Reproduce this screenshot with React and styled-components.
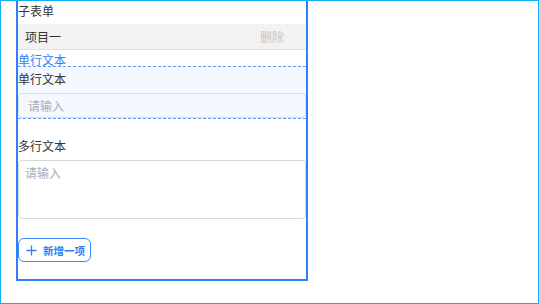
import React from 'react'
import styled, { createGlobalStyle } from 'styled-components'

const GlobalStyle = createGlobalStyle`
  html, body {
    margin: 0;
    padding: 0;
    background: #fff;
  }
  body {
    font-family: "Noto Sans CJK SC", "Noto Sans", sans-serif;
    font-size: 12px;
    color: #333;
  }
  * {
    box-sizing: border-box;
  }
`

const Page = styled.div`
  width: 539px;
  height: 304px;
  border: 1px solid #12aef5;
  padding-left: 15px;
  overflow: hidden;
`

const Frame = styled.div`
  width: 292px;
  height: 280px;
  border: 2px solid #2f80f8;
  border-top: none;
  display: flex;
  flex-direction: column;
`

const Title = styled.div`
  height: 23px;
  line-height: 20px;
`

const ItemRow = styled.div`
  height: 26px;
  display: flex;
  align-items: center;
  justify-content: space-between;
  padding: 0 22px 0 7px;
  background: #f2f2f2;
  border-bottom: 1px solid #e2e2e2;
`

const DeleteText = styled.span`
  color: #c6c6c6;
`

const FieldTag = styled.div`
  color: #2f80f8;
  height: 16px;
  padding-top: 4px;
  line-height: 12px;
`

const ActiveField = styled.div`
  background: #f5f9ff;
  border-top: 1px dashed #5b9ef8;
  border-bottom: 1px dashed #5b9ef8;
  padding-top: 3px;
  display: flex;
  flex-direction: column;
  gap: 5px;
`

const Label = styled.div`
  line-height: 18px;
`

const Input = styled.div`
  height: 25px;
  display: flex;
  align-items: center;
  padding: 0 9px;
  border: 1px solid #dadde2;
  border-radius: 4px;
  color: #a8adb5;
`

const Field = styled.div`
  margin-top: 18px;
  display: flex;
  flex-direction: column;
  gap: 5px;
`

const TextArea = styled.div`
  height: 59px;
  padding: 5px 6px;
  border: 1px solid #d6d8dc;
  border-radius: 4px;
  color: #a8adb5;
  line-height: 14px;
`

const AddButton = styled.button`
  margin-top: 19px;
  align-self: flex-start;
  height: 24px;
  width: 73px;
  display: flex;
  align-items: center;
  gap: 6px;
  padding: 0 0 0 7px;
  background: #fff;
  border: 1px solid #3a8bf8;
  border-radius: 6px;
  color: #2f80f8;
  font-family: inherit;
  font-size: 10.5px;
  font-weight: 600;
  white-space: nowrap;
`

const PlusIcon = () => (
  <svg width="11" height="11" viewBox="0 0 11 11">
    <path d="M5.5 0.5v10M0.5 5.5h10" stroke="#2f80f8" strokeWidth="1.3" fill="none" />
  </svg>
)

export default function App() {
  return (
    <Page>
      <GlobalStyle />
      <Frame>
        <Title>子表单</Title>
        <ItemRow>
          <span>项目一</span>
          <DeleteText>删除</DeleteText>
        </ItemRow>
        <FieldTag>单行文本</FieldTag>
        <ActiveField>
          <Label>单行文本</Label>
          <Input>请输入</Input>
        </ActiveField>
        <Field>
          <Label>多行文本</Label>
          <TextArea>请输入</TextArea>
        </Field>
        <AddButton>
          <PlusIcon />
          新增一项
        </AddButton>
      </Frame>
    </Page>
  )
}
